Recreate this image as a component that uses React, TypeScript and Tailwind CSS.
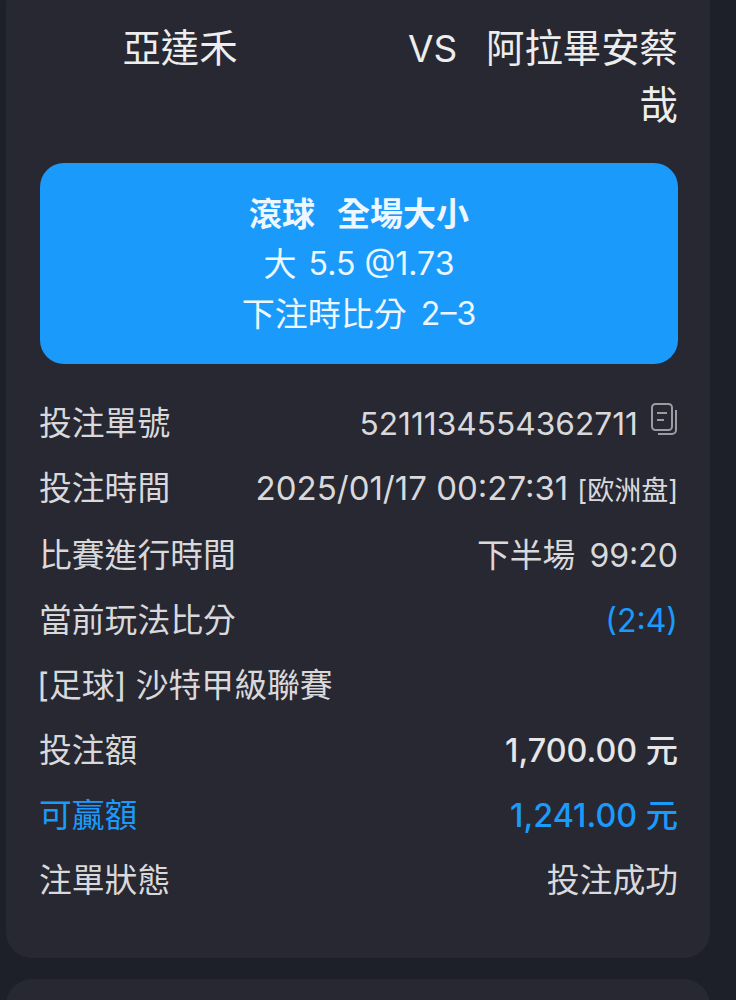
import React from "react";

function CopyIcon() {
    return (
        <svg width="28" height="34" viewBox="0 0 28 34" fill="none" stroke="#9b9ca3" strokeWidth="2" className="absolute right-0 top-0">
            <rect x="2" y="2" width="20" height="26" rx="3.5" />
            <path d="M7 11h10M7 18h7" />
            <path d="M26 8v20a4 4 0 0 1-4 4H8" />
        </svg>
    );
}

export default function App() {
    return (
        <div
            className="h-[1000px] w-[736px] overflow-hidden bg-[#1d2028] pl-[6px] text-[#d9d9dc]"
            style={{ fontFamily: '"Inter", "Noto Sans CJK TC", sans-serif' }}
        >
            <div className="-mt-5 w-[704px] rounded-[26px] bg-[#272831] pl-[34px] pr-[32px] pt-[40px] pb-[45px]">
                {/* Teams */}
                <div className="flex items-start text-[38.4px] leading-[57px] text-[#ededee]">
                    <div className="w-[280px] text-center">亞達禾</div>
                    <div className="ml-[88px] w-[48px] text-center text-[37px]">VS</div>
                    <div className="ml-[29px] flex-1 text-right">阿拉畢安蔡哉</div>
                </div>

                {/* Bet summary */}
                <div className="mt-[29px] flex h-[201px] flex-col items-center justify-center rounded-[24px] bg-[#1a9bfc] text-[33px] leading-[50px] text-[#eef7ff]">
                    <div className="flex gap-[22px] font-bold">
                        <span>滾球</span>
                        <span>全場大小</span>
                    </div>
                    <div className="flex gap-[12px]">
                        <span>大</span>
                        <span className="text-[32px]">5.5 @1.73</span>
                    </div>
                    <div className="flex gap-[14px]">
                        <span>下注時比分</span>
                        <span className="text-[32px]">2–3</span>
                    </div>
                </div>

                {/* Details */}
                <div className="-ml-px mt-[27px] flex flex-col text-[32.8px] leading-[65px]">
                    <div className="flex justify-between">
                        <span>投注單號</span>
                        <span className="relative flex pr-[40px] text-[31.7px]">
                            5211134554362711
                            <span className="absolute right-0 top-[11px] h-[34px] w-[28px]">
                                <CopyIcon />
                            </span>
                        </span>
                    </div>
                    <div className="flex justify-between">
                        <span>投注時間</span>
                        <span className="flex items-baseline text-[33px]">
                            2025/01/17 00:27:31
                            <span className="ml-[9px] text-[27px]">[欧洲盘]</span>
                        </span>
                    </div>
                    <div className="flex justify-between">
                        <span>比賽進行時間</span>
                        <span className="flex gap-[14px]">
                            <span>下半場</span>
                            <span className="text-[32px]">99:20</span>
                        </span>
                    </div>
                    <div className="flex justify-between">
                        <span>當前玩法比分</span>
                        <span className="text-[32px] text-[#1a9bfc]">(2:4)</span>
                    </div>
                    <div className="-ml-[2px]">[足球] 沙特甲級聯賽</div>
                    <div className="flex justify-between">
                        <span>投注額</span>
                        <span className="text-[32.3px] font-medium text-[#e6e6e8]">1,700.00 元</span>
                    </div>
                    <div className="flex justify-between text-[#1a9bfc]">
                        <span>可贏額</span>
                        <span className="text-[32.3px] font-medium">1,241.00 元</span>
                    </div>
                    <div className="flex justify-between">
                        <span>注單狀態</span>
                        <span>投注成功</span>
                    </div>
                </div>
            </div>

            <div className="mt-[21px] h-[60px] w-[704px] rounded-t-[26px] bg-[#272831]" />
        </div>
    );
}
